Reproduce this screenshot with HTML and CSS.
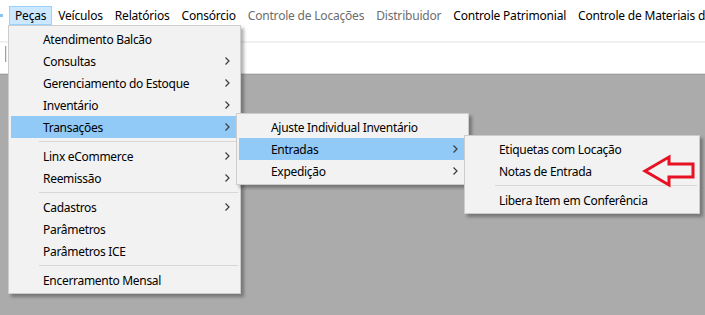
FILE: index.html
```html
<!DOCTYPE html>
<html lang="pt-br">
<head>
  <meta charset="UTF-8" />
  <title>Menu Peças</title>
  <link rel="stylesheet" href="styles.css">
</head>
<body>
  <div class="app">
    <!-- BARRA DE MENU -->
    <div class="menubar">
      <span class="app-icon"></span>
      <div class="menu-root">
        <span class="top-item active">Peças</span>

        <ul class="menu main-menu">
          <li class="item">Atendimento Balcão</li>
          <li class="item has-sub">Consultas <svg class="chev" width="5" height="8" viewBox="0 0 5 8"><path d="M0.5 0.5 L4 4 L0.5 7.5" /></svg></li>
          <li class="item has-sub">Gerenciamento do Estoque <svg class="chev" width="5" height="8" viewBox="0 0 5 8"><path d="M0.5 0.5 L4 4 L0.5 7.5" /></svg></li>
          <li class="item has-sub">Inventário <svg class="chev" width="5" height="8" viewBox="0 0 5 8"><path d="M0.5 0.5 L4 4 L0.5 7.5" /></svg></li>
          <li class="item has-sub open">Transações <svg class="chev" width="5" height="8" viewBox="0 0 5 8"><path d="M0.5 0.5 L4 4 L0.5 7.5" /></svg>

            <ul class="menu sub-menu">
              <li class="item">Ajuste Individual Inventário</li>
              <li class="item has-sub open">Entradas <svg class="chev" width="5" height="8" viewBox="0 0 5 8"><path d="M0.5 0.5 L4 4 L0.5 7.5" /></svg>

                <ul class="menu sub-menu wide">
                  <li class="item">Etiquetas com Locação</li>
                  <li class="item">Notas de Entrada</li>
                  <li class="sep"></li>
                  <li class="item">Libera Item em Conferência</li>
                </ul>
              </li>
              <li class="item has-sub">Expedição <svg class="chev" width="5" height="8" viewBox="0 0 5 8"><path d="M0.5 0.5 L4 4 L0.5 7.5" /></svg></li>
            </ul>
          </li>
          <li class="sep"></li>
          <li class="item has-sub">Linx eCommerce <svg class="chev" width="5" height="8" viewBox="0 0 5 8"><path d="M0.5 0.5 L4 4 L0.5 7.5" /></svg></li>
          <li class="item has-sub">Reemissão <svg class="chev" width="5" height="8" viewBox="0 0 5 8"><path d="M0.5 0.5 L4 4 L0.5 7.5" /></svg></li>
          <li class="sep"></li>
          <li class="item has-sub">Cadastros <svg class="chev" width="5" height="8" viewBox="0 0 5 8"><path d="M0.5 0.5 L4 4 L0.5 7.5" /></svg></li>
          <li class="item">Parâmetros</li>
          <li class="item">Parâmetros ICE</li>
          <li class="sep"></li>
          <li class="item">Encerramento Mensal</li>
        </ul>
      </div>
      <span class="top-item">Veículos</span>
      <span class="top-item">Relatórios</span>
      <span class="top-item">Consórcio</span>
      <span class="top-item disabled">Controle de Locações</span>
      <span class="top-item disabled">Distribuidor</span>
      <span class="top-item">Controle Patrimonial</span>
      <span class="top-item">Controle de Materiais de</span>
    </div>

    <!-- BARRA DE FERRAMENTAS -->
    <div class="toolbar">
      <span class="tb-sep"></span>
    </div>

    <!-- AREA DE TRABALHO -->
    <div class="workspace"></div>

    <!-- seta vermelha de destaque -->
    <svg class="marker" width="60" height="40" viewBox="640 152 60 40">
      <polygon points="645,171 669,157 669,164 693,164 693,177 669,177 669,185" />
    </svg>
  </div>
</body>
</html>
```

FILE: styles.css
```css
* {
  margin: 0;
  padding: 0;
  box-sizing: border-box;
  font-family: "Noto Sans", "Open Sans", sans-serif;
}

body {
  background-color: #ababab;
  width: 705px;
  height: 315px;
  overflow: hidden;
  font-size: 12px;
  letter-spacing: -0.3px;
  color: #000;
}

.app {
  position: relative;
  display: flex;
  flex-direction: column;
  height: 315px;
  overflow: hidden;
}

/* barra de menu */
.menubar {
  background: white;
  height: 43px;
  flex-shrink: 0;
  display: flex;
  align-items: flex-start;
  padding-top: 6px;
  white-space: nowrap;
  border-bottom: 2px solid #f0f0f0;
  position: relative;
  z-index: 2;
}

.menubar > * {
  flex-shrink: 0;
}

.app-icon {
  width: 3px;
  height: 3px;
  margin-top: 8px;
  margin-right: 6px;
  background: #8cc4f0;
}

.menu-root {
  position: relative;
}

.top-item {
  display: block;
  padding: 0 5px;
  line-height: 17px;
  letter-spacing: -0.2px;
  border: 1px solid transparent;
}

.top-item.active {
  background: #cce8ff;
  border-color: #99d1ff;
}

.top-item.disabled {
  color: #6d6d6d;
}

/* barra de ferramentas */
.toolbar {
  background: white;
  height: 31px;
  flex-shrink: 0;
  padding: 3px 0 0 5px;
  border-bottom: 1px solid #dcdcdc;
}

.tb-sep {
  display: block;
  width: 2px;
  height: 16px;
  border-left: 1px solid #a0a0a0;
  border-right: 1px solid #e8e8e8;
}

.workspace {
  flex: 1;
  background: #ababab;
  border-top: 1px solid #a0a0a0;
}

/* menus suspensos */
.menu {
  list-style: none;
  position: absolute;
  background: #f2f2f2;
  border: 1px solid #cccccc;
  padding: 2px;
  box-shadow: 3px 3px 3px rgba(0, 0, 0, 0.3);
  white-space: nowrap;
  z-index: 2;
}

.main-menu {
  top: 19px;
  left: -1px;
  width: 233px;
}

.sub-menu {
  top: -3px;
  left: calc(100% - 2px);
  width: 233px;
}

.sub-menu.wide {
  width: 236px;
}

.item {
  position: relative;
  display: flex;
  align-items: center;
  height: 22px;
  padding: 0 8px 0 32px;
}

.item.open {
  background: #91c9f7;
}

.chev {
  margin-left: auto;
}

.chev path {
  fill: none;
  stroke: #3c3c3c;
  stroke-width: 1.2;
}

.sep {
  height: 1px;
  margin: 3px 0 3px 28px;
  background: #d7d7d7;
}

.marker {
  position: absolute;
  left: 640px;
  top: 152px;
  z-index: 5;
}

.marker polygon {
  fill: none;
  stroke: #e81123;
  stroke-width: 3;
  stroke-linejoin: miter;
}
```
